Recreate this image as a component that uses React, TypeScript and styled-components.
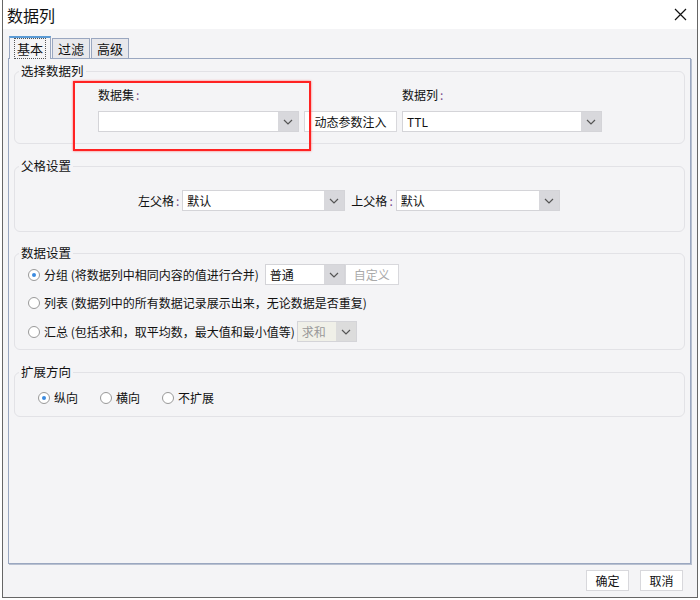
import React from "react";
import styled, { createGlobalStyle } from "styled-components";

const G = createGlobalStyle`
  html,body{margin:0;padding:0;background:#fff;}
  body{font-family:"Noto Sans CJK SC","Microsoft YaHei",sans-serif;font-size:12px;color:#111;}
  *{box-sizing:border-box;}
`;

const Win = styled.div`
  margin:0 2px;width:696px;height:598px;border:1px solid #666;border-top:none;
  background:#f4f4f6;display:flex;flex-direction:column;
`;
const TitleBar = styled.div`
  height:31px;background:#fff;display:flex;align-items:center;justify-content:space-between;
  padding:0 10px 0 4px;font-size:16px;
`;
const Body = styled.div`flex:1;display:flex;flex-direction:column;padding:6px 6px 6px 5px;`;
const Tabs = styled.div`display:flex;align-items:flex-end;height:23px;padding-left:1px;gap:1px;font-size:13px;`;
const Tab = styled.div<{ $on?: boolean }>`
  height:${p => (p.$on ? 23 : 20)}px;padding:0 5px;display:flex;align-items:center;
  border:1px solid #9aa7c0;border-bottom:none;background:${p => (p.$on ? "#f4f4f6" : "#e8e8ec")};
  ${p => p.$on && "border-top:2px solid #5b9bd5;margin-bottom:-1px;position:relative;z-index:1;"}
  span{${p => p.$on && "outline:1px dotted #555;padding:0 2px;"}}
`;
const Panel = styled.div`
  height:506px;border:1px solid #9aa7c0;box-shadow:1px 1px 0 #b8c0d0;padding:4px 5px 0 5px;
  display:flex;flex-direction:column;
`;
const Group = styled.div<{ $h: number; $mt?: number }>`
  position:relative;margin-top:${p => p.$mt ?? 0}px;height:${p => p.$h}px;
  border:1px solid #e2e2e6;border-radius:6px;padding-top:12px;
`;
const Legend = styled.div`
  position:absolute;top:-9px;left:4px;background:#f4f4f6;padding:0 2px;line-height:16px;font-size:12.5px;
`;
const Row = styled.div<{ $pl: number; $mt?: number }>`
  display:flex;align-items:center;padding-left:${p => p.$pl}px;margin-top:${p => p.$mt ?? 0}px;
`;
const Combo = styled.div<{ $w: number; $dis?: boolean }>`
  width:${p => p.$w}px;height:21px;border:1px solid #d4d4d8;background:${p => (p.$dis ? "#f0f0e8" : "#fff")};
  display:flex;align-items:center;color:${p => (p.$dis ? "#999" : "#111")};
  .t{flex:1;padding-left:4px;}
  .a{width:20px;height:100%;background:${p => (p.$dis ? "#dcdcdc" : "#d8d8dc")};display:flex;align-items:center;justify-content:center;}
`;
const Btn = styled.div<{ $w: number; $dis?: boolean }>`
  width:${p => p.$w}px;height:21px;border:1px solid #d8d8dc;background:#fff;
  display:flex;align-items:center;justify-content:center;color:${p => (p.$dis ? "#aaa" : "#111")};
`;
const Label = styled.span``;
const Colon = styled.span`color:#7a4a8a;margin:0 3px 0 2px;`;
const RadioDot = styled.span<{ $on?: boolean }>`
  width:12px;height:12px;border-radius:50%;border:1px solid #999;background:#fff;margin-right:4px;
  display:inline-flex;align-items:center;justify-content:center;
  &::after{content:"";width:4px;height:4px;border-radius:50%;background:${p => (p.$on ? "#3b8be0" : "transparent")};}
`;
const Radio = styled.label<{ $mr?: number }>`display:flex;align-items:center;margin-right:${p => p.$mr ?? 0}px;`;
const RedBox = styled.div`
  position:absolute;left:58px;top:9px;width:238px;height:70px;border:2px solid #f22;
  box-shadow:0 0 2px #f66;pointer-events:none;
`;
const Col = styled.div`display:flex;flex-direction:column;gap:8px;`;
const Footer = styled.div`display:flex;justify-content:flex-end;gap:11px;padding:6px 8px 0 0;`;

const Arrow = () => (
  <svg width="10" height="6" viewBox="0 0 10 6"><path d="M1 1l4 4 4-4" fill="none" stroke="#555" strokeWidth="1.2" /></svg>
);
const C = ({ w, t, dis }: { w: number; t?: string; dis?: boolean }) => (
  <Combo $w={w} $dis={dis}><span className="t">{t}</span><span className="a"><Arrow /></span></Combo>
);

export default function App() {
  return (
    <>
      <G />
      <Win>
        <TitleBar>
          <span>数据列</span>
          <svg width="13" height="13" viewBox="0 0 13 13"><path d="M1 1l11 11M12 1L1 12" stroke="#111" strokeWidth="1.2" /></svg>
        </TitleBar>
        <Body>
          <Tabs>
            <Tab $on><span>基本</span></Tab>
            <Tab><span>过滤</span></Tab>
            <Tab><span>高级</span></Tab>
          </Tabs>
          <Panel>
            <Group $h={73} $mt={8}>
              <Legend>选择数据列</Legend>
              <RedBox />
              <Row $pl={83} $mt={2}>
                <Col>
                  <span>数据集<Colon>:</Colon></span>
                  <C w={201} />
                </Col>
                <Col style={{ marginLeft: 5 }}>
                  <span>&nbsp;</span>
                  <Btn $w={93}>动态参数注入</Btn>
                </Col>
                <Col style={{ marginLeft: 5 }}>
                  <span>数据列<Colon>:</Colon></span>
                  <C w={200} t="TTL" />
                </Col>
              </Row>
            </Group>
            <Group $h={66} $mt={22}>
              <Legend>父格设置</Legend>
              <Row $pl={123} $mt={11}>
                <Label>左父格<Colon>:</Colon></Label>
                <C w={163} t="默认" />
                <Label style={{ marginLeft: 6 }}>上父格<Colon>:</Colon></Label>
                <C w={164} t="默认" />
              </Row>
            </Group>
            <Group $h={97} $mt={21}>
              <Legend>数据设置</Legend>
              <Row $pl={13} $mt={-2}>
                <Radio><RadioDot $on />分组 (将数据列中相同内容的值进行合并)</Radio>
                <span style={{ marginLeft: 6 }} />
                <C w={80} t="普通" />
                <Btn $w={54} $dis>自定义</Btn>
              </Row>
              <Row $pl={13} $mt={9}>
                <Radio><RadioDot />列表 (数据列中的所有数据记录展示出来，无论数据是否重复)</Radio>
              </Row>
              <Row $pl={13} $mt={10}>
                <Radio><RadioDot />汇总 (包括求和，取平均数，最大值和最小值等)</Radio>
                <span style={{ marginLeft: 2 }} />
                <C w={60} t="求和" dis />
              </Row>
            </Group>
            <Group $h={45} $mt={22}>
              <Legend>扩展方向</Legend>
              <Row $pl={23} $mt={4}>
                <Radio $mr={22}><RadioDot $on />纵向</Radio>
                <Radio $mr={22}><RadioDot />横向</Radio>
                <Radio><RadioDot />不扩展</Radio>
              </Row>
            </Group>
          </Panel>
          <Footer>
            <Btn $w={43}>确定</Btn>
            <Btn $w={43}>取消</Btn>
          </Footer>
        </Body>
      </Win>
    </>
  );
}
